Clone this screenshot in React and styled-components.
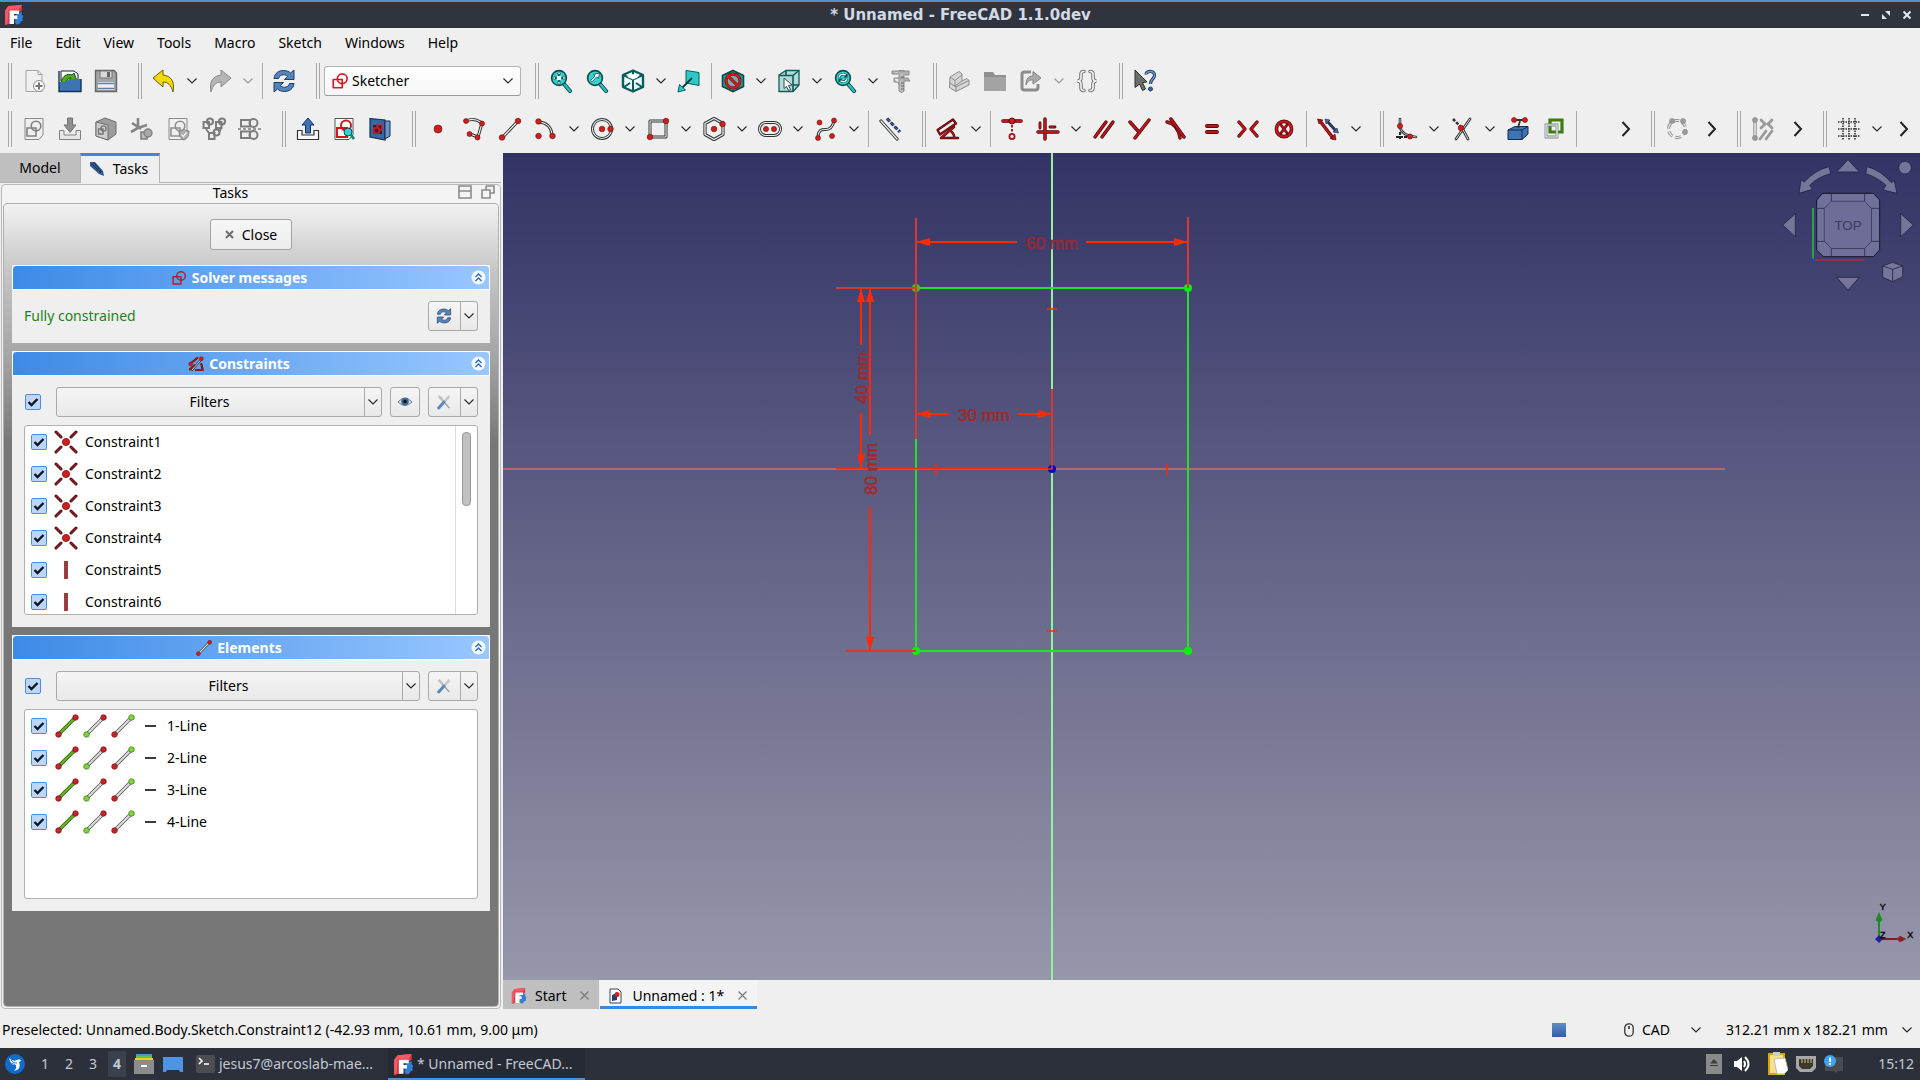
import React from "react";
import styled, { createGlobalStyle } from "styled-components";

const BLUE = "#3c87e0";
const UI = '"Noto Sans", "Open Sans", sans-serif';

const Global = createGlobalStyle`
  *, *::before, *::after { box-sizing: border-box; }
  body { margin: 0; background: #efefef; }
  button, input, select { font: inherit; color: inherit; margin: 0; }
  button { padding: 0; background: none; border: 0; }
  svg { display: block; flex: none; }
`;

/* ---------- drawing helpers ---------- */

const Svg = ({ size = 24, box = 24, children }) => (
  <svg width={size} height={size} viewBox={`0 0 ${box} ${box}`} fill="none" aria-hidden="true">
    {children}
  </svg>
);

const Tube = ({ d, outer = "#2e3436", inner = "#eeeeec", w = 3.4 }) => (
  <g strokeLinecap="round" strokeLinejoin="round">
    <path d={d} stroke={outer} strokeWidth={w} />
    <path d={d} stroke={inner} strokeWidth={w - 1.9} />
  </g>
);

const Dot = ({ x, y, r = 2.5, fill = "#cc1f1f", stroke = "#6e0a0a" }) => (
  <circle cx={x} cy={y} r={r} fill={fill} stroke={stroke} strokeWidth="0.6" />
);

const Bar = ({ d, w = 3 }) => (
  <g strokeLinecap="round" strokeLinejoin="round">
    <path d={d} stroke="#4a0505" strokeWidth={w - 0.4} />
    <path d={d} stroke="#b9161c" strokeWidth={w - 1.7} />
  </g>
);

const Chevron = ({ color = "#2b2b2b" }) => (
  <svg width="10" height="6" viewBox="0 0 10 6" fill="none" aria-hidden="true">
    <path d="M0.5 0.5L5 5L9.5 0.5" stroke={color} strokeWidth="1.2" />
  </svg>
);

const Logo = ({ size = 18 }) => (
  <Svg size={size} box={18}>
    <path d="M4 1L16 0V5L13 7H5V17L1 18V5Z" fill="#e03a48" />
    <path d="M4 1L16 0 13 4H4L3 17 1 18V5Z" fill="#f35a66" />
    <path d="M11 8l2-2 1 1 2-1v3l1.500 1-1 2 0.500 2-2 1-1 2-3 0.500-1-2V12z" fill="#2f7fd6" />
    <path d="M5 5H13.500V8H9V9.500H12V12.500H9V17H5Z" fill="#fff" />
  </Svg>
);

const SyncGlyph = () => (
  <g fill="#5584bd" stroke="#1c3c66" strokeLinejoin="round">
    <path d="M2 9.500C2.500 4 7 1.500 11.500 1.500c3 0 5.500 1 7 2.500L22 1v9.500h-9.500l3.200-3.200C14.500 6.300 13 5.800 11.500 5.800 9 5.800 7.200 7 6.500 9.500z" />
    <path d="M22 14.500C21.500 20 17 22.500 12.500 22.500c-3 0-5.500-1-7-2.500L2 23v-9.500h9.500l-3.200 3.200c1.200 1 2.700 1.500 4.200 1.500 2.500 0 4.300-1.200 5-3.700z" />
  </g>
);

const SketchGlyph = ({ color = "#cf1b24" }) => (
  <g stroke={color} strokeWidth="2.200" strokeLinejoin="round">
    <path d="M3 10H15V21H3Z" />
    <circle cx="15" cy="9" r="6.500" />
  </g>
);

const Lens = ({ children }) => (
  <>
    <path d="M15 15L21 22" stroke="#0b4d4d" strokeWidth="4.200" strokeLinecap="round" />
    <path d="M15 15L21 22" stroke="#27bdbd" strokeWidth="2.400" strokeLinecap="round" />
    <circle cx="10" cy="9" r="7.400" fill="#38cfcf" stroke="#0b4d4d" strokeWidth="1.600" />
    {children}
  </>
);

const Page = ({ stroke = "#8f8f8f", fill = "#f6f6f6" }) => (
  <path d="M3 1.500H21V18L17 22.500H3Z" fill={fill} stroke={stroke} />
);

const BRACES = "M9 2.500H8.500Q6 2.500 6 5.500V8.500Q6 12 2.500 12 6 12 6 15.500V18.500Q6 21.500 8.500 21.500H9M15 2.500H15.500Q18 2.500 18 5.500V8.500Q18 12 21.500 12 18 12 18 15.500V18.500Q18 21.500 15.500 21.500H15";

const ICONS = {
  newFile: (
    <>
      <path d="M4 1.500H16L20 5.500V22.500H4Z" fill="#f0f0f0" stroke="#a5a5a5" />
      <path d="M16 1.500V5.500H20" stroke="#a5a5a5" />
      <circle cx="17" cy="17" r="5.500" fill="#fff" stroke="#8d8d8d" />
      <path d="M17 13.500v7M13.500 17h7" stroke="#777" strokeWidth="2" />
    </>
  ),
  open: (
    <>
      <path d="M3 2H16L20 5V12H3Z" fill="#fff" stroke="#123" />
      <path d="M3 14C4 7 9 4 14 6l2-2 3 8H11l2-3c-3 0-5 2-6 6z" fill="#4fae12" stroke="#1b4a05" />
      <path d="M1 13H8L11 10H23V22H1Z" fill="#3d74b4" />
      <path d="M1 2V22.500H23V10" stroke="#143257" strokeWidth="1.400" />
    </>
  ),
  save: (
    <>
      <path d="M1.500 1.500H20L22.500 4V22.500H1.500Z" fill="#a4a4a4" stroke="#666" strokeWidth="1.400" />
      <path d="M6 2H18V9H6Z" fill="#d9d9d9" stroke="#777" />
      <path d="M13 3h3v5h-3z" fill="#666" />
      <path d="M4 13H20V21H4Z" fill="#efefef" />
      <path d="M4 14.500H20M4 19.500H20" stroke="#5b7fa8" strokeWidth="1.600" />
    </>
  ),
  undo: <path d="M1 9L11 1V6C19 7 23 12 21 23C19 16 16 13 11 13V18Z" fill="#f5d90a" stroke="#6d5c00" strokeLinejoin="round" />,
  redo: <path d="M23 9L13 1V6C5 7 1 12 3 23C5 16 8 13 13 13V18Z" fill="#b5b5b5" stroke="#8a8a8a" strokeLinejoin="round" />,
  sync: <SyncGlyph />,
  fitAll: (
    <Lens>
      <path d="M10 3.500V14.500M4.500 9H15.500" stroke="#0b4d4d" strokeWidth="1.400" />
      <path d="M10 2.500l2 2.500H8zM10 15.500l2-2.500H8zM3.500 9l2.500-2v4zM16.500 9l-2.500-2v4z" fill="#fff" stroke="#0b4d4d" strokeWidth="0.600" />
      <rect x="8" y="7" width="4" height="4" fill="#fff" />
    </Lens>
  ),
  fitSel: (
    <Lens>
      <path d="M14.500 4L13.500 9.500 11.500 8 7 13 5.500 11.500 10 7 8.500 5.500Z" fill="#fff" stroke="#0b4d4d" strokeWidth="0.800" />
    </Lens>
  ),
  isoCube: (
    <g strokeLinejoin="round">
      <path d="M12 1.500L22 6V18L12 22.500 2 18V6Z" fill="#eafafa" stroke="#0d5c5c" strokeWidth="2.400" />
      <path d="M2 6L12 10.500 22 6M12 10.500V22M12 2V9M3 18L9 14M21 18L15 14" stroke="#0d5c5c" strokeWidth="2" />
      <path d="M6 7.800L12 5 18 7.800 12 10.500Z" fill="#fff" />
    </g>
  ),
  alignSel: (
    <>
      <path d="M9 1.500L22 3.500V16.500L9 14Z" fill="#2dc8c8" stroke="#0b5d5d" />
      <path d="M15 9L5 19" stroke="#083c3c" strokeWidth="1.800" />
      <path d="M1 23L2.500 15.500 8.500 21Z" fill="#2dc8c8" stroke="#0b5d5d" />
    </>
  ),
  noDraw: (
    <>
      <path d="M12 1.500L22.500 6.500V17.500L12 22.500 1.500 17.500V6.500Z" fill="#17a3a3" stroke="#0a4747" strokeWidth="1.600" />
      <circle cx="12" cy="12" r="7" fill="#7fa9ad" stroke="#520606" strokeWidth="3" />
      <path d="M7 7L17 17" stroke="#520606" strokeWidth="3" />
      <circle cx="12" cy="12" r="7" stroke="#d61a1a" strokeWidth="2" />
      <path d="M7 7L17 17" stroke="#d61a1a" strokeWidth="2" />
    </>
  ),
  selCube: (
    <>
      <path d="M2 6L9 1.500H22V16L16 22.500H2Z" fill="#b4dbd9" stroke="#0f5a5a" strokeWidth="1.300" />
      <path d="M2 6.500H16V22.500M16 6.500L22 1.500M9 2V6M16 16H22" stroke="#0f5a5a" strokeWidth="1.600" />
      <path d="M7 9L15 16 11.500 16.500 13.500 20.500 11.500 21.500 9.500 17.500 7 19.500Z" fill="#fff" stroke="#1b3a3a" strokeWidth="0.900" />
    </>
  ),
  zoomRef: (
    <Lens>
      <path d="M6 8.500C6.500 5.500 10 4 13 6.500M14 9.500C13.500 12.500 10 14 7 11.500" stroke="#0b4d4d" strokeWidth="2.600" />
      <path d="M6 8.500C6.500 5.500 10 4 13 6.500M14 9.500C13.500 12.500 10 14 7 11.500" stroke="#e8ffff" strokeWidth="1.400" />
      <path d="M14.500 4V8.500H10.500ZM5.500 14V9.500H9.500Z" fill="#0b4d4d" />
    </Lens>
  ),
  caliper: (
    <>
      <path d="M10 1.500H15V22L12.500 23.500 10 22Z" fill="#bdbdbd" stroke="#8c8c8c" />
      <path d="M3 2H20V6H16M3 2V5H10M5 9H19L21 12H15M5 9V13H9L10 16" fill="#b0b0b0" stroke="#8c8c8c" />
      <path d="M12 8h3M12 14h3M12 17h3M12 20h3" stroke="#666" />
    </>
  ),
  part: (
    <g fill="#d6d6d6" stroke="#8b8b8b" strokeLinejoin="round">
      <path d="M3 8L12 2.500 15 5V12L20 9.500 22 11.500V16L9 22.500 2.500 18.500Z" />
      <path d="M3 8L8 11.500 15 6M8 11.500V17L15 12M2.500 14L9 18V22.500M9 18L22 11.500" />
    </g>
  ),
  folder: (
    <>
      <path d="M1 3H10L12 6H23V22H1Z" fill="#8f8f8f" />
      <path d="M1 8H23V22H1Z" fill="#a3a3a3" />
    </>
  ),
  link: (
    <>
      <path d="M12 3H5.500Q3 3 3 5.500V18.500Q3 21 5.500 21H16.500Q19 21 19 18.500V15" stroke="#8c8c8c" strokeWidth="3" />
      <path d="M7 16C7 10 9 7 14 7V2.500L22 9 14 15V11C10 11 9 12 7 16Z" fill="#a9a9a9" stroke="#838383" />
    </>
  ),
  braces: (
    <>
      <path d={BRACES} stroke="#777" strokeWidth="3.600" strokeLinecap="round" />
      <path d={BRACES} stroke="#f4f4f4" strokeWidth="1.600" strokeLinecap="round" />
    </>
  ),
  whatsThis: (
    <>
      <path d="M2 1L14 13 9.500 13.500 12.500 20 9.500 21.500 6.500 15 2 18.500Z" fill="#6b6f6b" stroke="#2f3330" />
      <path d="M13 5.500C13 1.500 22 1 21.500 6.500 21.300 10 17.500 10 17.500 15" stroke="#22406b" strokeWidth="3.200" />
      <path d="M13 5.500C13 1.500 22 1 21.500 6.500 21.300 10 17.500 10 17.500 15" stroke="#6f97c9" strokeWidth="1.400" />
      <circle cx="17.500" cy="20" r="2" fill="#35639b" stroke="#22406b" />
    </>
  ),
  gSketch: (
    <>
      <Page stroke="#8a8a8a" fill="#efefef" />
      <g stroke="#808080" strokeWidth="1.600"><path d="M5 11H14V19H5Z" /><circle cx="14" cy="9" r="4.800" /></g>
    </>
  ),
  gImport: (
    <>
      <path d="M1.500 13.500H6V18H18V13.500H22.500V22.500H1.500Z" fill="#e6e6e6" stroke="#808080" />
      <path d="M9.500 1H14.500V8H18L12 15.500 6 8H9.500Z" fill="#8f8f8f" stroke="#707070" />
    </>
  ),
  gBox: (
    <>
      <path d="M2 5L11 1 22 5 22 17 14 23 2 19Z" fill="#9d9d9d" stroke="#6e6e6e" />
      <path d="M2 5L14 8V23L2 19Z" fill="#cfcfcf" stroke="#6e6e6e" />
      <path d="M4.500 12H9V17H4.500Z" stroke="#777" strokeWidth="1.400" /><circle cx="9.500" cy="11.500" r="2.600" stroke="#777" strokeWidth="1.400" />
    </>
  ),
  gMove: (
    <>
      <path d="M8 1V11L1 15M8 11L17 8M2 6L11 12" stroke="#858585" strokeWidth="2.600" />
      <path d="M11 15H17V22H11Z" fill="#bdbdbd" stroke="#808080" strokeWidth="1.600" /><circle cx="18" cy="16" r="4" fill="#a9a9a9" stroke="#808080" strokeWidth="1.400" />
    </>
  ),
  gValid: (
    <>
      <Page stroke="#8a8a8a" fill="#efefef" />
      <g stroke="#909090" strokeWidth="1.600"><path d="M5 11H14V19H5Z" /><circle cx="14" cy="9" r="4.800" /></g>
      <path d="M13 14Q17 14 18 12 19 14 23 14 23 21 18 23 13 21 13 14Z" fill="#adadad" stroke="#808080" />
      <path d="M15.500 17.500L17.500 19.500 20.500 15.500" stroke="#eee" strokeWidth="1.400" />
    </>
  ),
  gMerge: (
    <g stroke="#7c7c7c" strokeWidth="2">
      <path d="M1.500 5H7V11H1.500Z" /><circle cx="8" cy="4.500" r="3" />
      <path d="M14 5H19.500V11H14Z" /><circle cx="20" cy="4.500" r="3" />
      <path d="M7 16H12.500V22H7Z" /><circle cx="14.500" cy="15.500" r="3" />
      <path d="M4 12L7 16M19 12L17 15" />
    </g>
  ),
  gMirror: (
    <g stroke="#7c7c7c" strokeWidth="2">
      <path d="M3 3H12V9.500H3Z" /><circle cx="15.500" cy="6" r="4" />
      <path d="M3 14.500H12V21H3Z" /><circle cx="15.500" cy="18" r="4" />
      <path d="M0 12H24" strokeDasharray="3 2" strokeWidth="1.300" />
    </g>
  ),
  leave: (
    <>
      <path d="M1.500 13.500H6V18H18V13.500H22.500V22.500H1.500Z" fill="#fafafa" stroke="#333" strokeWidth="1.200" />
      <path d="M9.500 16H14.500V8H18L12 1 6 8H9.500Z" fill="#3f73b5" stroke="#143257" />
    </>
  ),
  viewSketch: (
    <>
      <Page stroke="#555" fill="#fff" />
      <g stroke="#d6141b" strokeWidth="2"><path d="M5 11H15V20H5Z" /><circle cx="14" cy="8.500" r="5" /></g>
      <circle cx="16" cy="15" r="4" fill="#38cfcf" stroke="#0b4d4d" /><path d="M19 18L22 22" stroke="#0f8080" strokeWidth="2.600" />
    </>
  ),
  section: (
    <>
      <path d="M2 1.500L17 3V23L2 20Z" fill="#3a66a3" stroke="#142c52" strokeWidth="1.200" />
      <path d="M17 4H22V19L17 22Z" fill="#6c94c9" stroke="#142c52" />
      <path d="M5 8H14V17H5Z" fill="#3c1832" /><path d="M6 16V11H11V16ZM9 11V8H14V13H11" stroke="#d01e27" strokeWidth="1.500" />
    </>
  ),
  point: <Dot x={12} y={12} r={4} />,
  polyline: (
    <>
      <Tube d="M4 4Q12 0 20 6L16 20 8 17" w={3} />
      <Dot x={4} y={4} /><Dot x={20} y={6.5} /><Dot x={15.500} y={20.500} /><Dot x={7.500} y={17} />
    </>
  ),
  line: <><Tube d="M4 21L20 4" w={3.200} /><Dot x={4} y={20.500} r={2.800} /><Dot x={20} y={4} r={2.800} /></>,
  arc: <><Tube d="M5 5Q17 6 18 18" w={3} /><Dot x={4.500} y={4.500} r={2.800} /><Dot x={18.500} y={19} r={2.800} /><Dot x={4.500} y={19} r={2.800} /></>,
  circle: <><Tube d="M2.500 12a9.500 9.500 0 1 0 19 0a9.500 9.500 0 1 0 -19 0" w={3} /><Dot x={12} y={12} r={2.800} /><Dot x={20.500} y={12} r={2.800} /></>,
  rect: <><Tube d="M4 4H20V20H4Z" w={3} /><Dot x={20} y={4} r={2.800} /><Dot x={4} y={20} r={2.800} /></>,
  polygon: <><Tube d="M12 1.500L21 6.500V17.500L12 22.500 3 17.500V6.500Z" w={3.200} /><Dot x={12} y={12} r={2.800} /><Dot x={20.500} y={7} r={2.800} /></>,
  slot: <><Tube d="M8 5.500H16A6.500 6.500 0 0 1 16 18.500H8A6.500 6.500 0 0 1 8 5.500Z" w={3} /><Dot x={8} y={12} r={2.600} /><Dot x={16} y={12} r={2.600} /></>,
  spline: <><Tube d="M4 20Q4 12 11 12.500T20 4" w={3} /><Dot x={4} y={21} /><Dot x={20} y={3.500} /><Dot x={5.500} y={5.500} /><Dot x={18} y={19} /></>,
  construction: (
    <>
      <Tube d="M3 4L19 22" w={3.200} />
      <path d="M9 1.500L22 15" stroke="#1b2d5a" strokeWidth="3" strokeDasharray="4 1.500" />
      <path d="M9 1.500L22 15" stroke="#5578b5" strokeWidth="1" strokeDasharray="4 1.500" />
    </>
  ),
  dimension: <><Bar d="M1.500 13L17 2.500 20 6.500 4 17.500Z" w={2.600} /><Bar d="M5 21H22M5 21L18 10M14 13.500Q18 16 18.500 21" w={2.900} /></>,
  coincident: (
    <>
      <Bar d="M3 4H21" w={4} /><circle cx="12" cy="4" r="3" fill="#d71a20" stroke="#4a0505" />
      <path d="M12 8V17" stroke="#8e1014" strokeWidth="1.800" strokeDasharray="2.500 1.500" /><circle cx="12" cy="19.500" r="2.600" stroke="#a3141a" strokeWidth="1.800" fill="#eee" />
    </>
  ),
  horVer: <><Bar d="M9 2V22M2 15H22" w={3.800} /><Bar d="M14 10H19M4 6V11" w={3.200} /></>,
  parallel: <Bar d="M3 20L14 5M10 20L21 5" w={3.800} />,
  perp: <Bar d="M2 5L10 14M21 3L7 21" w={3.800} />,
  tangent: <><Bar d="M3 5Q14 7 16 21" w={3.800} /><Bar d="M7 2L20 20" w={3.800} /></>,
  equal: <Bar d="M7 9H17M7 15H17" w={4.200} />,
  symmetric: <Bar d="M3 5L9 12 3 19M21 5L15 12 21 19" w={3.800} />,
  block: <><circle cx="12" cy="12" r="7.600" stroke="#4a0505" strokeWidth="3.600" /><circle cx="12" cy="12" r="7.600" stroke="#c4161c" strokeWidth="2.400" /><Bar d="M9 8L15 16M15 8L9 16" w={3.200} /></>,
  toggle: (
    <>
      <Bar d="M4 4L17 21" w={3.800} /><path d="M1.500 2L7 3 3 7ZM20 23L14 21.500 19 17Z" fill="#b31319" stroke="#4a0505" strokeWidth="0.600" />
      <path d="M11 4L20 14" stroke="#27365e" strokeWidth="3" /><path d="M9 2L14 3 10 7ZM22.500 16L17 15 21 11Z" fill="#4e6496" stroke="#1c2949" strokeWidth="0.600" />
    </>
  ),
  fillet: (
    <>
      <Tube d="M6 2V10Q8 19 22 20" w={2.600} /><path d="M2 20H14M6 15V23" stroke="#222" strokeWidth="2" strokeDasharray="3 1" />
      <Dot x={6} y={9} r={2.600} /><Dot x={16} y={19.500} r={2.600} />
    </>
  ),
  trim: <><Tube d="M20 2L6 22M12 11L18 22" w={2.800} /><path d="M3 2L10 9" stroke="#333" strokeWidth="2.600" strokeDasharray="3 1.500" /><Dot x={11} y={11} r={2.800} /></>,
  external: (
    <>
      <path d="M2 13L9 9.500H22V17L16 22.500H2Z" fill="#3d74b4" stroke="#102a4c" /><path d="M2 13H16V22.500M16 13L22 9.500" stroke="#102a4c" />
      <path d="M14 4L12 11M8 3H18" stroke="#333" strokeWidth="1.800" /><Dot x={8} y={3} /><Dot x={19} y={3} />
    </>
  ),
  carbon: (
    <>
      <path d="M8 3H20V15H8Z" stroke="#3d7d0a" strokeWidth="3.200" /><path d="M4 8H15V20H4Z" stroke="#7b8790" strokeWidth="2.800" /><path d="M4 8H15V20H4Z" stroke="#f0f0f0" strokeWidth="1.200" />
    </>
  ),
  gBspline: (
    <>
      <circle cx="12" cy="12" r="8.500" stroke="#8e8e8e" strokeWidth="3" strokeDasharray="6 3" /><circle cx="12" cy="12" r="8.500" stroke="#ededed" strokeWidth="1.200" strokeDasharray="6 3" />
      <Dot x={18} y={4} fill="#9b9b9b" stroke="#808080" /><Dot x={20} y={15} fill="#9b9b9b" stroke="#808080" /><Dot x={7} y={4} fill="#9b9b9b" stroke="#808080" />
    </>
  ),
  gVisual: (
    <>
      <Tube d="M4 4V20" outer="#8a8a8a" /><Dot x={4} y={3} fill="#9b9b9b" stroke="#808080" /><Dot x={4} y={21} fill="#9b9b9b" stroke="#808080" />
      <path d="M10 3L14 7 10 11M21 3L17 7 21 11M9 22L15 14M15 22L21 14" stroke="#999" strokeWidth="2.800" strokeLinecap="round" />
    </>
  ),
  grid: <path d="M6 1V23M12 1V23M18 1V23M1 5H23M1 12H23M1 19H23" stroke="#333" strokeWidth="1.600" strokeDasharray="1.500 1" />,
};

/* ---------- shell ---------- */

const Window = styled.div`
  display: flex; flex-direction: column; min-height: 100vh; overflow: hidden;
  font-family: ${UI}; font-size: 14px; line-height: 20px; color: #000; background: #efefef;
`;
const TitleBar = styled.header`
  display: grid; grid-template-columns: 1fr auto 1fr; align-items: center;
  height: 28px; padding: 0 3px 0 4px; border-top: 2px solid #4a90d9; background: #2f343f; color: #d3dae3;
`;
const Title = styled.h1`margin: 0; font-family: "DejaVu Sans", sans-serif; font-size: 15px; line-height: 20px; font-weight: 700;`;
const WindowButtons = styled.div`display: flex; justify-content: flex-end; gap: 1px;`;
const WindowButton = styled.button`display: flex; width: 20px; height: 20px; align-items: center; justify-content: center;`;
const MenuBar = styled.nav`display: flex; height: 29px; padding: 0 0 0 10px; gap: 23px; align-items: center;`;
const MenuItem = styled.button`height: 24px;`;

const ToolRow = styled.div`display: flex; gap: 10px; height: 48px; padding: 6px 5px 6px 4px;`;
const Group = styled.div`display: flex; align-items: center; flex: ${p => (p.$grow ? "1 1 auto" : "0 0 auto")};`;
const Handle = styled.span`
  width: 12px; height: 36px; flex: none; display: flex; justify-content: center; align-items: stretch;
  &::before { content: ""; width: 4px; border: solid #a9a9a9; border-width: 0 1px; }
`;
const Divider = styled.span`
  width: 8px; height: 36px; flex: none; display: flex; justify-content: center;
  &::before { content: ""; width: 1px; background: #ababab; }
`;
const ToolButton = styled.button`width: 36px; height: 36px; flex: none; display: flex; align-items: center; justify-content: center;`;
const MenuButton = styled(ToolButton)`width: 20px;`;
const Extender = styled(ToolButton)`width: 22px; margin-left: ${p => (p.$end ? "auto" : "6px")};`;

const WorkbenchBox = styled.label`
  position: relative; display: flex; align-items: center; gap: 3px; width: 197px; height: 30px; padding: 0 7px 0 6px;
  border: 1px solid #b4b4b4; border-bottom-color: #999; border-radius: 3px; background: linear-gradient(#fff, #f6f6f6);
`;
const PlainSelect = styled.select`
  appearance: none; flex: 1 1 auto; min-width: 0; border: 0; padding: 0; background: transparent; font-size: 14px; line-height: 20px; height: 24px;
`;

const Main = styled.main`display: flex; flex: 1 1 auto; min-height: 0;`;

/* ---------- dock ---------- */

const Dock = styled.aside`flex: 0 0 503px; display: flex; flex-direction: column; padding-bottom: 2px;`;
const DockTabs = styled.div`display: flex; height: 30px; width: 501px; border-bottom: 1px solid #b3b3b3;`;
const DockTab = styled.button`
  display: flex; align-items: center; justify-content: center; gap: 8px; width: 80px;
  height: ${p => (p.$active ? "30px" : "29px")};
  background: ${p => (p.$active ? "#efefef" : "#bfbfbf")};
  border: ${p => (p.$active ? "1px solid #b3b3b3" : "0")};
  border-top: ${p => (p.$active ? `3px solid ${BLUE}` : "0")};
  border-bottom: 0; padding: ${p => (p.$active ? "0 3px 2px 0" : "0")};
`;
const DockFrame = styled.section`
  flex: 1 1 auto; display: flex; flex-direction: column; margin: 1px 2px 0 1px; padding: 0 1px 1px;
  border: 1px solid #b9b9b9; border-radius: 4px; background: #f4f4f4;
`;
const DockHeader = styled.div`display: flex; align-items: flex-start; height: 18px; padding: 0 4px 0 0;`;
const DockTitle = styled.h2`flex: 1 1 auto; margin: 0; font-size: 14px; line-height: 16px; font-weight: 400; text-align: center;`;
const DockActions = styled.div`display: flex; gap: 9px;`;
const DockBody = styled.div`
  flex: 1 1 auto; display: flex; flex-direction: column; gap: 8px; padding: 15px 8px 0;
  border: 1px solid #b0b0b0; border-radius: 4px;
  background: linear-gradient(#f2f2f2 0, #c4c4c4 70px, #a6a6a6 150px, #777 240px, #777 100%);
`;
const CloseButton = styled.button`
  align-self: center; display: flex; align-items: center; justify-content: center; gap: 8px;
  width: 82px; height: 31px; margin-bottom: 7px; border: 1px solid #a3a3a3; border-radius: 3px;
  background: linear-gradient(#f6f6f6, #ececec);
`;
const Panel = styled.section`background: #efefef;`;
const PanelHeader = styled.header`
  display: flex; align-items: center; height: 25px; padding: 0 3px; color: #fff;
  border: 1px solid #fff; border-radius: 4px 4px 0 0; background: linear-gradient(90deg, #3d8ae6, #99c7ff);
`;
const PanelTitle = styled.h3`
  flex: 1 1 auto; display: flex; align-items: center; justify-content: center; gap: 5px;
  margin: 0; padding-right: 9px; font-size: 14px; line-height: 20px; font-weight: 700;
`;
const PanelBody = styled.div`display: flex; flex-direction: column; gap: 8px; padding: 11px 12px 12px;`;
const Row = styled.div`display: flex; align-items: center; gap: 8px; height: 30px;`;
const SolverText = styled.p`flex: 1 1 auto; margin: 0; color: #1b831b;`;
const FilterCheck = styled.span`display: flex; width: 24px; flex: none; justify-content: flex-start; padding-left: 1px;`;

const Split = styled.div`
  display: flex; height: 30px; flex: ${p => (p.$grow ? "1 1 auto" : "0 0 50px")};
  border: 1px solid #a9a9a9; border-radius: 3px; background: linear-gradient(#f5f5f5, #e9e9e9);
`;
const SplitMain = styled.button`flex: 1 1 auto; display: flex; align-items: center; justify-content: center; padding-right: 2px;`;
const SplitMenu = styled.button`flex: 0 0 17px; display: flex; align-items: center; justify-content: center; border-left: 1px solid #a9a9a9;`;
const IconButton = styled.button`
  display: flex; flex: none; align-items: center; justify-content: center; width: 30px; height: 30px;
  border: 1px solid #a9a9a9; border-radius: 3px; background: linear-gradient(#f5f5f5, #e9e9e9);
`;

const ListBox = styled.div`
  display: flex; height: 190px; border: 1px solid #b0b0b0; border-radius: 3px; background: #fff; overflow: hidden;
`;
const List = styled.ul`flex: 1 1 auto; margin: 0; padding: 0 0 0 6px; list-style: none;`;
const ListRow = styled.li`height: 32px;`;
const RowLabel = styled.label`display: flex; align-items: center; height: 32px; gap: ${p => p.$gap};`;
const Glyphs = styled.span`display: flex; align-items: center; gap: 4px;`;
const Track = styled.div`width: 22px; flex: none; padding: 6px; border-left: 1px solid #dcdcdc;`;
const Thumb = styled.div`width: 9px; height: 74px; border: 1px solid #979797; border-radius: 4px; background: #c1c1c1;`;

const Check = styled.input`
  appearance: none; flex: none; width: 16px; height: 16px; border: 1px solid #4a8fdf; border-radius: 2px;
  background: #bcd6f5 url("data:image/svg+xml,%3Csvg xmlns='http://www.w3.org/2000/svg' viewBox='0 0 14 14' fill='none'%3E%3Cpath d='M2.500 7L5.500 10L11.500 4' stroke='%230c1524' stroke-width='2.400'/%3E%3C/svg%3E") center / 14px 14px no-repeat;
`;

/* ---------- 3D view ---------- */

const Documents = styled.section`flex: 1 1 auto; min-width: 0; display: flex; flex-direction: column;`;
const Viewport = styled.div`position: relative; flex: 1 1 auto; overflow: hidden; background: linear-gradient(#333366, #9797ab);`;
const Scene = styled.svg`position: absolute; inset: 0; width: 100%; height: 100%;`;
const CubeSlot = styled.div`position: absolute; top: 0; right: 0;`;
const AxisSlot = styled.div`position: absolute; bottom: 0; right: 0;`;
const DocTabs = styled.div`display: flex; height: 31px; padding-bottom: 2px; gap: 1px;`;
const DocTab = styled.div`
  display: flex; align-items: center; gap: 8px; height: 29px; padding: 2px 10px 0 8px;
  background: ${p => (p.$active ? "#f4f4f4" : "#bfbfbf")};
  box-shadow: inset 0 -3px ${p => (p.$active ? BLUE : "#bfbfbf")};
`;
const DocName = styled.button`display: flex; align-items: center; gap: 8px; margin-right: 6px;`;

const StatusBar = styled.footer`display: flex; align-items: center; height: 37px; padding: 0 8px 0 2px;`;
const StatusText = styled.output`flex: 1 1 auto;`;
const NoticeButton = styled.button`width: 14px; height: 14px; margin-right: 58px; background: linear-gradient(#5c8cc9, #33609b);`;
const StatusPick = styled.label`display: flex; align-items: center; gap: 8px; width: ${p => p.$width}; margin-left: ${p => p.$left};`;

/* ---------- desktop panel ---------- */

const Taskbar = styled.footer`
  display: flex; align-items: center; height: 32px; padding: 0 6px 0 5px; background: #2b303b; color: #c3c9d4;
`;
const Desks = styled.div`display: flex; gap: 6px; margin: 0 8px 0 11px;`;
const Desk = styled.button`
  width: 18px; height: 26px; background: ${p => (p.$active ? "#3b404d" : "transparent")};
  font-weight: ${p => (p.$active ? 700 : 400)};
`;
const Launchers = styled.div`display: flex; gap: 9px; margin-right: 8px;`;
const Task = styled.button`
  display: flex; align-items: center; gap: 3px; height: 32px; padding: 2px 2px 0 5px; width: 197px; white-space: nowrap; overflow: hidden;
  background: ${p => (p.$active ? "#262a34" : "transparent")};
  border-bottom: 2px solid ${p => (p.$active ? "#4a90d9" : "transparent")};
`;
const Tray = styled.div`display: flex; align-items: center; margin-left: auto; gap: 8px;`;
const Clock = styled.time`margin-left: 26px; min-width: 35px;`;

/* ---------- parts ---------- */

const Tool = ({ id, label, menu, dim }) => (
  <>
    <ToolButton type="button" aria-label={label}><Svg size={24}>{ICONS[id]}</Svg></ToolButton>
    {menu && <MenuButton type="button" aria-label={`${label} options`}><Chevron color={dim ? "#9a9a9a" : "#2b2b2b"} /></MenuButton>}
  </>
);

const More = ({ end }) => (
  <Extender type="button" aria-label="More tools" $end={end}>
    <svg width="10" height="16" viewBox="0 0 10 16" fill="none" aria-hidden="true"><path d="M1.500 1L8 8L1.500 15" stroke="#222" strokeWidth="2" /></svg>
  </Extender>
);

const Tools = ({ items, grow, extender }) => (
  <Group $grow={grow} role="toolbar">
    <Handle />
    {items.map((it, i) => (it === "|" ? <Divider key={i} /> : <Tool key={i} id={it[0]} label={it[1]} menu={it[2]} dim={it[3]} />))}
    {extender && <More end={grow} />}
  </Group>
);

const FILE = [["newFile", "New"], ["open", "Open"], ["save", "Save"]];
const EDIT = [["undo", "Undo", true], ["redo", "Redo", true, true], "|", ["sync", "Refresh"]];
const VIEW = [
  ["fitAll", "Fit all"], ["fitSel", "Fit selection"], ["isoCube", "Isometric", true], ["alignSel", "Align to selection"], "|",
  ["noDraw", "Draw style", true], ["selCube", "Bounding box", true], ["zoomRef", "Link view", true], ["caliper", "Measure"],
];
const STRUCT = [["part", "Create part"], ["folder", "Create group"], ["link", "Make link", true, true], ["braces", "Variable set"]];
const SKETCH = [
  ["gSketch", "Create sketch"], ["gImport", "Attach sketch"], ["gBox", "Map sketch"], ["gMove", "Reorient sketch"],
  ["gValid", "Validate sketch"], ["gMerge", "Merge sketches"], ["gMirror", "Mirror sketch"],
];
const MODE = [["leave", "Leave sketch"], ["viewSketch", "View sketch"], ["section", "View section"]];
const GEOMETRY = [
  ["point", "Point"], ["polyline", "Polyline"], ["line", "Line"], ["arc", "Arc", true], ["circle", "Circle", true],
  ["rect", "Rectangle", true], ["polygon", "Polygon", true], ["slot", "Slot", true], ["spline", "B-spline", true], "|",
  ["construction", "Construction geometry"],
];
const CONSTRAIN = [
  ["dimension", "Dimension", true], "|", ["coincident", "Coincident"], ["horVer", "Horizontal or vertical", true],
  ["parallel", "Parallel"], ["perp", "Perpendicular"], ["tangent", "Tangent"], ["equal", "Equal"],
  ["symmetric", "Symmetric"], ["block", "Block"], "|", ["toggle", "Toggle driving", true],
];
const MODIFY = [["fillet", "Fillet", true], ["trim", "Trim", true], ["external", "External geometry"], ["carbon", "Carbon copy"], "|"];

const PanelHead = ({ icon, children }) => (
  <PanelHeader>
    <PanelTitle>{icon}{children}</PanelTitle>
    <button type="button" aria-label={`Collapse ${children}`}>
      <svg width="15" height="15" viewBox="0 0 15 15" fill="none" aria-hidden="true">
        <circle cx="7.500" cy="7.500" r="7" fill="#f4f9ff" />
        <path d="M4.500 7L7.500 4L10.500 7M4.500 11L7.500 8L10.500 11" stroke="#2b6cb8" strokeWidth="1.300" />
      </svg>
    </button>
  </PanelHeader>
);

const SplitButton = ({ label, grow, children }) => (
  <Split $grow={grow}>
    <SplitMain type="button" aria-label={label}>{children}</SplitMain>
    <SplitMenu type="button" aria-label={`${label} menu`}><Chevron /></SplitMenu>
  </Split>
);

const Wrench = () => (
  <Svg size={16} box={24}>
    <path d="M4 3L20 21" stroke="#a8a8a8" strokeWidth="2.400" /><path d="M4 3L10 9" stroke="#c4c4c4" strokeWidth="4" />
    <path d="M20 3L13 11" stroke="#c9c9c9" strokeWidth="4" /><path d="M12 12L4 21" stroke="#5b87c0" strokeWidth="4.500" strokeLinecap="round" />
  </Svg>
);

const Eye = () => (
  <Svg size={16} box={16}>
    <path d="M1 8Q8 0 15 8Q8 15 1 8Z" fill="#d5dfe9" stroke="#6d7d8d" />
    <circle cx="8" cy="7.500" r="3.800" fill="#3d6698" /><circle cx="8" cy="7.500" r="1.800" fill="#111" />
  </Svg>
);

const Coincident = () => (
  <Svg size={24}>
    <g strokeLinecap="round">
      <path d="M2 2L7 7M22 2L17 7M2 22L7 17M22 22L17 17" stroke="#4a0a0e" strokeWidth="3" />
      <path d="M2 2L7 7M22 2L17 7M2 22L7 17M22 22L17 17" stroke="#8e2028" strokeWidth="1.400" />
    </g>
    <circle cx="12" cy="12" r="3.600" fill="#cf2020" stroke="#7c0d0d" strokeWidth="0.800" />
  </Svg>
);
const Vertical = () => <Svg size={24}><path d="M12 3V21" stroke="#4a0505" strokeWidth="3.400" /><path d="M12 3V21" stroke="#c83036" strokeWidth="1.800" /></Svg>;

const Segment = ({ edge, start, end }) => {
  const c = { red: ["#c4242b", "#6e0a0a"], green: ["#7fd238", "#2f6b0a"] };
  return (
    <Svg size={24}>
      <Tube d="M4 20L20 4" outer={edge ? "#2f6b0a" : "#5e6264"} inner={edge ? "#6cb02c" : "#dcdcdc"} w={3.800} />
      <Dot x={3.500} y={20.500} r={2.800} fill={c[start][0]} stroke={c[start][1]} />
      <Dot x={20.500} y={3.500} r={2.800} fill={c[end][0]} stroke={c[end][1]} />
    </Svg>
  );
};

const CONSTRAINTS = [1, 2, 3, 4, 5, 6];
const LINES = [1, 2, 3, 4];

const Sketch = () => {
  const red = "#fb2a05";
  const soft = "#d33a34";
  const text = {
    fontFamily: '"Liberation Sans", Arial, sans-serif', fontSize: 17, fill: "#a02a2e",
    stroke: "#a02a2e", strokeWidth: 0.6, textAnchor: "middle",
  };
  return (
    <Scene aria-label="Sketch view">
      <path d="M0 316H1222" stroke="#d96a67" strokeWidth="1.500" />
      <path d="M549 0V827" stroke="#98ee9d" strokeWidth="2" />
      <path d="M413 135H685V498H413Z" stroke="#22e02c" strokeWidth="2" fill="none" />
      <circle cx="413" cy="135" r="4" fill="#47c410" />
      <circle cx="685" cy="135" r="4" fill="#0cee0c" />
      <circle cx="413" cy="498" r="4" fill="#0cee0c" />
      <circle cx="685" cy="498" r="4" fill="#0cee0c" />
      <path d="M413 65V286M685 64V135M333 135H413M549 236V316M343 498H413" stroke={soft} strokeWidth="2" />
      <path d="M333 315.500H549M413 89H514M583 89H685M413 261H446M515 261H549M358 135V192M358 260V315M367 135V282M367 354V498" stroke={red} strokeWidth="2" />
      <path d="M544 156H554M544 478H554M433 311V322M664 311V322" stroke={red} strokeWidth="1.500" />
      <path d="M413 89l14-4v8zM685 89l-14-4v8zM413 261l14-4v8zM549 261l-14-4v8zM358 135l-4 14h8zM367 135l-4 14h8zM358 315l-4-14h8zM367 498l-4-14h8z" fill={red} />
      <circle cx="549" cy="316" r="4" fill="#0808c4" />
      <path d="M549 311V316H545" stroke={soft} strokeWidth="1.500" fill="none" />
      <text x="549" y="96" {...text} fill="#8f2b36" stroke="#8f2b36">60 mm</text>
      <text x="481" y="268" {...text}>30 mm</text>
      <text transform="translate(365 225) rotate(-90)" {...text}>40 mm</text>
      <text transform="translate(374 316) rotate(-90)" {...text}>80 mm</text>
    </Scene>
  );
};

const NavCube = () => (
  <svg width="160" height="147" viewBox="0 9 480 441" aria-label="Navigation cube">
    <g fill="#75759c" stroke="#24243f" strokeWidth="2.500" strokeLinejoin="round">
      <path d="M264 29L298 66H230ZM264 420L230 382H298ZM68 225L106 191V260ZM460 225L422 191V260Z" />
      <path d="M207 50L212 71Q175 80 149 106L158 118 117 130 123 89 133 96Q165 60 207 50Z" />
      <path d="M321 50L317 71Q352 82 378 106L369 120 411 130 403 92 394 98Q362 60 321 50Z" />
      <circle cx="435" cy="53" r="19" />
      <path d="M398 337L428 348V380L398 395 368 382V348Z" /><path d="M368 348L398 358 428 348M398 358V395" fill="none" />
    </g>
    <path d="M188 130H340L359 150V300L340 320H190L170 300V150Z" fill="#70709a" stroke="#15152b" strokeWidth="3" />
    <path d="M214 130V154L193 175H170M314 130V154L334 175H359M214 320V295L193 274H170M314 320V295L334 274H359M214 154H314M334 175V274M314 295H214M193 274V175" fill="none" stroke="#2b2b48" strokeWidth="2.500" />
    <path d="M214 155H314L333 176V273L314 294H214L194 273V176Z" fill="#6d6d98" />
    <path d="M159 174V330" stroke="#27a346" strokeWidth="6" /><path d="M162 330H314" stroke="#93304f" strokeWidth="6" /><path d="M155 330H163" stroke="#1845d0" strokeWidth="9" />
    <text x="264" y="240" textAnchor="middle" fontFamily='"Liberation Sans", Arial, sans-serif' fontSize="40" fill="#3c3c5c">TOP</text>
  </svg>
);

const AxisCross = () => (
  <svg width="140" height="90" viewBox="0 0 420 270" aria-label="Axis cross">
    <path d="M297 147V90" stroke="#1f8a24" strokeWidth="6" /><path d="M297 66L307 90 297 100 287 90Z" fill="#1f8a24" />
    <path d="M300 147H352" stroke="#7d2023" strokeWidth="6" /><path d="M379 147L360 157 350 147 360 137Z" fill="#8c1f22" />
    <path d="M297 136L309 147 297 159 285 147Z" fill="#20209a" />
    <g fontFamily='"Liberation Sans", Arial, sans-serif' fontSize="27" fill="#000" stroke="#000" strokeWidth="1" textAnchor="middle">
      <text x="308" y="59">Y</text><text x="308" y="144">Z</text><text x="391" y="143">X</text>
    </g>
  </svg>
);

const Cross = () => <svg width="9" height="9" viewBox="0 0 9 9" aria-hidden="true"><path d="M0.500 0.500L8.500 8.500M8.500 0.500L0.500 8.500" stroke="#777" strokeWidth="1.100" /></svg>;

export default function App() {
  return (
    <Window>
      <Global />
      <TitleBar>
        <Logo size={20} />
        <Title>* Unnamed - FreeCAD 1.1.0dev</Title>
        <WindowButtons>
          <WindowButton type="button" aria-label="Minimize"><Svg size={10} box={10}><path d="M1 5H9" stroke="#e3e7ee" strokeWidth="2" /></Svg></WindowButton>
          <WindowButton type="button" aria-label="Restore"><Svg size={10} box={10}><path d="M4 1H9V6ZM1 4V9H6Z" fill="#e3e7ee" /></Svg></WindowButton>
          <WindowButton type="button" aria-label="Close window"><Svg size={10} box={10}><path d="M1.500 1.500L8.500 8.500M8.500 1.500L1.500 8.500" stroke="#e3e7ee" strokeWidth="2" /></Svg></WindowButton>
        </WindowButtons>
      </TitleBar>
      <MenuBar>
        {["File", "Edit", "View", "Tools", "Macro", "Sketch", "Windows", "Help"].map(m => <MenuItem key={m} type="button">{m}</MenuItem>)}
      </MenuBar>
      <ToolRow>
        <Tools items={FILE} />
        <Tools items={EDIT} />
        <Group>
          <Handle />
          <WorkbenchBox>
            <Svg size={18}><SketchGlyph /></Svg>
            <PlainSelect aria-label="Workbench" defaultValue="Sketcher"><option>Sketcher</option></PlainSelect>
            <Chevron />
          </WorkbenchBox>
        </Group>
        <Tools items={VIEW} />
        <Tools items={STRUCT} />
        <Tools items={[["whatsThis", "What's this?"]]} />
      </ToolRow>
      <ToolRow>
        <Tools items={SKETCH} />
        <Tools items={MODE} />
        <Tools items={GEOMETRY} />
        <Tools items={CONSTRAIN} />
        <Tools items={MODIFY} grow extender />
        <Tools items={[["gBspline", "B-spline tools"]]} extender />
        <Tools items={[["gVisual", "Visual helpers"]]} extender />
        <Tools items={[["grid", "Grid", true]]} extender />
      </ToolRow>
      <Main>
        <Dock>
          <DockTabs>
            <DockTab type="button">Model</DockTab>
            <DockTab type="button" $active>
              <Svg size={16} box={16}><path d="M1 1L6 1 14 10 15 15 10 13 1 5Z" fill="#33578c" /><path d="M3 3L12 12M5 2L13 11" stroke="#17305a" /></Svg>
              Tasks
            </DockTab>
          </DockTabs>
          <DockFrame>
            <DockHeader>
              <DockTitle>Tasks</DockTitle>
              <DockActions>
                <button type="button" aria-label="Toggle overlay"><Svg size={14} box={14}><path d="M1 1H13V13H1ZM1 6H13" stroke="#8b8b8b" strokeWidth="1.600" /></Svg></button>
                <button type="button" aria-label="Float"><Svg size={14} box={14}><path d="M5 1H13V8H9M5 5V1M1 5H9V13H1Z" stroke="#8b8b8b" strokeWidth="1.600" /></Svg></button>
              </DockActions>
            </DockHeader>
            <DockBody>
              <CloseButton type="button"><Svg size={9} box={9}><path d="M1 1L8 8M8 1L1 8" stroke="#6c6c6c" strokeWidth="2" /></Svg>Close</CloseButton>
              <Panel>
                <PanelHead icon={<Svg size={16}><SketchGlyph color="#b3202c" /></Svg>}>Solver messages</PanelHead>
                <PanelBody>
                  <Row>
                    <SolverText>Fully constrained</SolverText>
                    <SplitButton label="Update"><Svg size={16} box={24}><SyncGlyph /></Svg></SplitButton>
                  </Row>
                </PanelBody>
              </Panel>
              <Panel>
                <PanelHead icon={<Svg size={16}><Bar d="M3 12L14 3M3 20L10 14M12 21H22L20 12" w={3.600} /><Tube d="M6 21L20 5" w={3.200} /><Dot x={4} y={12} r={3} /><Dot x={20} y={4} r={3} /></Svg>}>Constraints</PanelHead>
                <PanelBody>
                  <Row>
                    <FilterCheck><Check type="checkbox" aria-label="Filter constraints" defaultChecked /></FilterCheck>
                    <SplitButton grow label="Filters">Filters</SplitButton>
                    <IconButton type="button" aria-label="Show or hide all"><Eye /></IconButton>
                    <SplitButton label="Constraint settings"><Wrench /></SplitButton>
                  </Row>
                  <ListBox>
                    <List>
                      {CONSTRAINTS.map(n => (
                        <ListRow key={n}><RowLabel $gap="7px"><Check type="checkbox" defaultChecked />{n < 5 ? <Coincident /> : <Vertical />}Constraint{n}</RowLabel></ListRow>
                      ))}
                    </List>
                    <Track><Thumb /></Track>
                  </ListBox>
                </PanelBody>
              </Panel>
              <Panel>
                <PanelHead icon={<Svg size={16}><Tube d="M4 20L20 4" w={3.600} outer="#444" /><Dot x={3.500} y={20.500} r={3} /><Dot x={20.500} y={3.500} r={3} /></Svg>}>Elements</PanelHead>
                <PanelBody>
                  <Row>
                    <FilterCheck><Check type="checkbox" aria-label="Filter elements" defaultChecked /></FilterCheck>
                    <SplitButton grow label="Filters">Filters</SplitButton>
                    <SplitButton label="Element settings"><Wrench /></SplitButton>
                  </Row>
                  <ListBox>
                    <List>
                      {LINES.map(n => (
                        <ListRow key={n}>
                          <RowLabel $gap="8px">
                            <Check type="checkbox" defaultChecked />
                            <Glyphs>
                              <Segment edge start="red" end="red" /><Segment start="green" end="red" /><Segment start="red" end="green" />
                              <svg width="20" height="24" viewBox="0 0 20 24" aria-hidden="true"><path d="M6 12H17" stroke="#3b3b3b" strokeWidth="2" /></svg>
                            </Glyphs>
                            <span>{n}-Line</span>
                          </RowLabel>
                        </ListRow>
                      ))}
                    </List>
                  </ListBox>
                </PanelBody>
              </Panel>
            </DockBody>
          </DockFrame>
        </Dock>
        <Documents>
          <Viewport>
            <Sketch />
            <CubeSlot><NavCube /></CubeSlot>
            <AxisSlot><AxisCross /></AxisSlot>
          </Viewport>
          <DocTabs>
            <DocTab>
              <DocName type="button"><Logo size={16} />Start</DocName>
              <button type="button" aria-label="Close Start"><Cross /></button>
            </DocTab>
            <DocTab $active>
              <DocName type="button">
                <Svg size={16} box={16}><path d="M2 1H10L13 4V15H2Z" fill="#fff" stroke="#444" /><path d="M4 7L9 5V12L4 13Z" fill="#1f3f74" /><circle cx="9" cy="6.500" r="2.500" fill="#c22" /></Svg>
                Unnamed : 1*
              </DocName>
              <button type="button" aria-label="Close Unnamed"><Cross /></button>
            </DocTab>
          </DocTabs>
        </Documents>
      </Main>
      <StatusBar>
        <StatusText>Preselected: Unnamed.Body.Sketch.Constraint12 (-42.93 mm, 10.61 mm, 9.00 μm)</StatusText>
        <NoticeButton type="button" aria-label="Notifications" />
        <StatusPick $width="77px" $left="0px">
          <svg width="10" height="14" viewBox="0 0 10 14" fill="none" aria-hidden="true"><rect x="0.800" y="0.800" width="8.400" height="12.400" rx="4" stroke="#333" strokeWidth="1.300" /><path d="M5 3V6" stroke="#333" strokeWidth="1.600" /></svg>
          <PlainSelect aria-label="Navigation style" defaultValue="CAD"><option>CAD</option></PlainSelect>
          <Chevron />
        </StatusPick>
        <StatusPick $width="186px" $left="25px">
          <PlainSelect aria-label="View dimensions" defaultValue="312.21 mm x 182.21 mm"><option>312.21 mm x 182.21 mm</option></PlainSelect>
          <Chevron />
        </StatusPick>
      </StatusBar>
      <Taskbar>
        <button type="button" aria-label="Applications">
          <Svg size={20} box={20}><circle cx="10" cy="10" r="10" fill="#0f6ccb" /><path d="M4 4Q8 8 12 6Q15 4 16 7L14 8Q17 15 9 17Q12 14 11 11Q6 12 4 4Z" fill="#fff" /><path d="M6 6Q9 10 12 9M7 9L10 11" stroke="#0f6ccb" strokeWidth="0.900" /></Svg>
        </button>
        <Desks>{["1", "2", "3", "4"].map(n => <Desk key={n} type="button" $active={n === "4"}>{n}</Desk>)}</Desks>
        <Launchers>
          <button type="button" aria-label="Files"><Svg size={20} box={20}><path d="M2 0H18V4H2Z" fill="#3f9be0" /><path d="M2 2H18V5H2Z" fill="#61c04e" /><path d="M1 4H19V8H1Z" fill="#f3c932" /><path d="M0 6H20V20H0Z" fill="#8b8d8c" /><path d="M7 12H13" stroke="#fff" strokeWidth="2" /></Svg></button>
          <button type="button" aria-label="Show desktop"><Svg size={20} box={20}><path d="M0 3H20V18H17L16 16H4L3 18H0Z" fill="#4f94e3" /></Svg></button>
        </Launchers>
        <Task type="button" $active={false}>
          <Svg size={20} box={20}><rect y="1" width="19" height="18" rx="2" fill="#4b4d50" /><path d="M3 4L6 7L3 10M8 10H13" stroke="#fff" strokeWidth="1.600" /></Svg>
          jesus7@arcoslab-mae...
        </Task>
        <Task type="button" $active><Logo size={21} />* Unnamed - FreeCAD...</Task>
        <Tray>
          <Svg size={20} box={20}><path d="M2 0H18V20H2Z" fill="#8a8a8a" /><path d="M10 5L14 9.500H6ZM6 11H14V12H6Z" fill="#3d3d3d" /></Svg>
          <Svg size={20} box={20}><path d="M2 7H5L10 3V17L5 13H2Z" fill="#fff" /><path d="M12 7Q14 10 12 13M13 3Q20 10 13 17" stroke="#fff" strokeWidth="2" /></Svg>
          <Svg size={28} box={28}><path d="M9 4H24V24H9Z" fill="#f6e08a" stroke="#d8a800" strokeWidth="2" /><path d="M13 2H20V6H13Z" fill="#ccc" /><path d="M14 9L25 8 28 20 24 24H17Z" fill="#fff" stroke="#bbb" /></Svg>
          <Svg size={20} box={20}><path d="M0 2H20V14L16 18H4L0 14Z" fill="#a7a7a7" /><path d="M3 5H17V12L14 15H6L3 12Z" fill="#3b3a2d" /><path d="M6 5V9M9 5V9M12 5V9M15 5V9" stroke="#d9c97a" /></Svg>
          <Svg size={20} box={20}><path d="M3 3H19V17H14L12 19 10 17H1V10Z" fill="#494b50" /><circle cx="6" cy="7" r="6" fill="#3fa2f4" /><path d="M6 3.500V8M6 9V11" stroke="#fff" strokeWidth="1.800" /></Svg>
          <Clock>15:12</Clock>
        </Tray>
      </Taskbar>
    </Window>
  );
}
